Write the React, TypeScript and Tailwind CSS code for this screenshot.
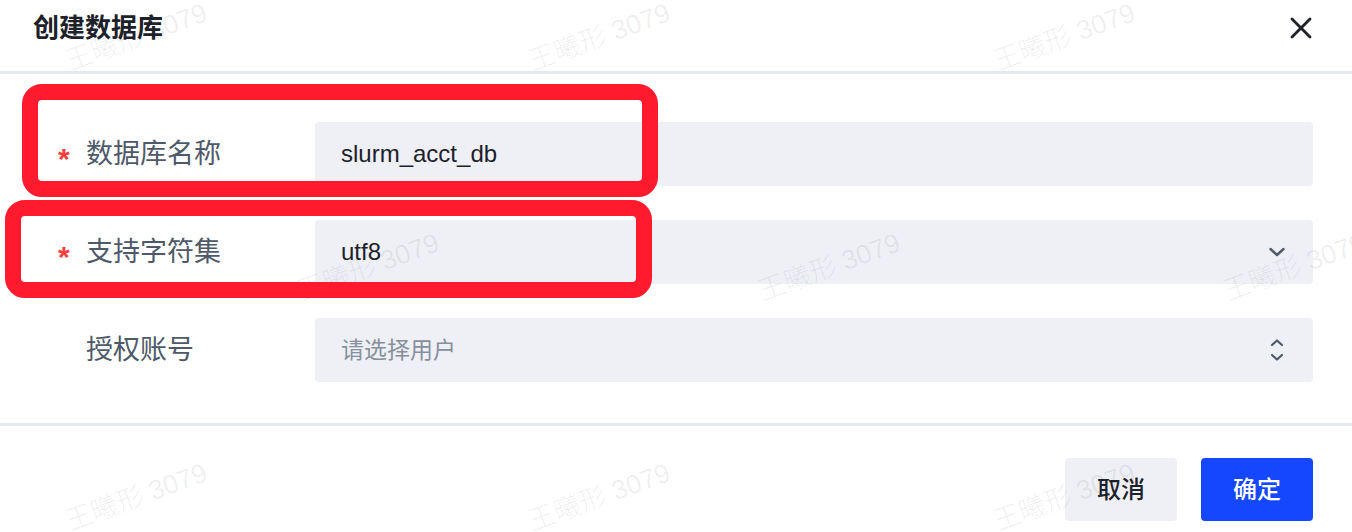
import React from 'react';

const watermarks = [
  { x: 140, y: 37 },
  { x: 603, y: 37 },
  { x: 1068, y: 37 },
  { x: 372, y: 267 },
  { x: 833, y: 267 },
  { x: 1298, y: 267 },
  { x: 140, y: 497 },
  { x: 603, y: 497 },
  { x: 1068, y: 497 },
];

const ChevronDown = () => (
  <svg width="20" height="20" viewBox="0 0 20 20" fill="none" stroke="#4e5969" strokeWidth="2.4" strokeLinecap="round" strokeLinejoin="round">
    <path d="M3.5 7 L10 13 L16.5 7" />
  </svg>
);

const UpDown = () => (
  <svg width="20" height="30" viewBox="0 0 20 30" fill="none" stroke="#4e5969" strokeWidth="2.2" strokeLinecap="round" strokeLinejoin="round">
    <path d="M5 10 L10 5.5 L15 10" />
    <path d="M5 20 L10 24.5 L15 20" />
  </svg>
);

const Row: React.FC<{ label: string; required?: boolean; children: React.ReactNode }> = ({ label, required, children }) => (
  <div className="flex items-center h-[64px]">
    <div className="w-[315px] shrink-0 flex items-center pl-[58px]">
      <span className="w-[28px] text-[30px] font-bold leading-none text-[#f53f3f] pt-[10px]">{required ? '*' : ''}</span>
      <span className="text-[27px] leading-[36px] text-[#4e5969]">{label}</span>
    </div>
    <div className="flex-1 h-[64px] rounded-[4px] bg-[#eef0f6] flex items-center justify-between pl-[26px] pr-[26px]">
      {children}
    </div>
  </div>
);

export default function App() {
  return (
    <div
      className="relative w-[1352px] h-[532px] bg-white overflow-hidden"
      style={{ fontFamily: '"Liberation Sans", "Noto Sans CJK SC", sans-serif' }}
    >
      {/* header */}
      <div className="flex items-start justify-between h-[71px] pl-[33px] pr-[40px] pt-[11px]">
        <span className="text-[26px] leading-[34px] font-bold text-[#1d2129]">创建数据库</span>
        <svg className="mt-[6px]" width="22" height="22" viewBox="0 0 22 22" fill="none" stroke="#1d2129" strokeWidth="2.8" strokeLinecap="round">
          <path d="M2 2 L20 20" />
          <path d="M20 2 L2 20" />
        </svg>
      </div>
      <div className="h-[3px] bg-[#e5e8ef]" />

      {/* form */}
      <div className="flex flex-col gap-[34px] pt-[48px] pb-[41px] pr-[39px]">
        <Row label="数据库名称" required>
          <span className="text-[24px] leading-[30px] text-[#1d2129]">slurm_acct_db</span>
        </Row>
        <Row label="支持字符集" required>
          <span className="text-[24px] leading-[30px] text-[#1d2129]">utf8</span>
          <ChevronDown />
        </Row>
        <Row label="授权账号">
          <span className="text-[23px] leading-[30px] text-[#86909c]">请选择用户</span>
          <UpDown />
        </Row>
      </div>
      <div className="h-[3px] bg-[#e5e8ef]" />

      {/* footer */}
      <div className="flex justify-end gap-[24px] pt-[32px] pr-[39px]">
        <button className="w-[112px] h-[63px] rounded-[4px] bg-[#eef0f6] text-[24px] font-medium text-[#1d2129]">取消</button>
        <button className="w-[112px] h-[63px] rounded-[4px] bg-[#1547ff] text-[24px] font-medium text-white">确定</button>
      </div>

      {/* watermark */}
      {watermarks.map((w, i) => (
        <span
          key={i}
          className="absolute pointer-events-none whitespace-nowrap text-[27px] leading-[32px] font-light text-black/[0.07] -rotate-[20deg]"
          style={{ left: w.x - 78, top: w.y - 16 }}
        >
          王曦形 3079
        </span>
      ))}

      {/* annotation boxes */}
      <div className="absolute left-[22px] top-[84px] w-[636px] h-[113px] border-[16px] border-[#ff1a2e] rounded-[20px] pointer-events-none" />
      <div className="absolute left-[5px] top-[200px] w-[647px] h-[98px] border-[16px] border-[#ff1a2e] rounded-[20px] pointer-events-none" />
    </div>
  );
}
